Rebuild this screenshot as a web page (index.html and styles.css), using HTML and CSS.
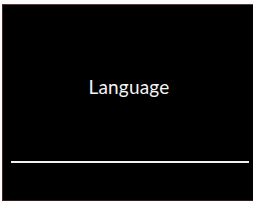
FILE: index.html
```html
<!DOCTYPE html>
<html lang="en">
<head>
    <meta charset="UTF-8">
    <meta name="viewport" content="width=device-width, initial-scale=1.0">
    <title>Language</title>
    <link rel="stylesheet" href="styles.css">
</head>
<body>
    <div class="screen">
        <div class="title-area">
            <h1 class="title">Language</h1>
        </div>
        <div class="divider"></div>
        <div class="footer"></div>
    </div>
</body>
</html>
```

FILE: styles.css
```css
html, body {
    margin: 0;
    padding: 0;
    background-color: #fdfbfb;
    width: 253px;
    height: 201px;
    overflow: hidden;
}

.screen {
    margin: 4px 0 0 2px;
    height: 195px;
    background-color: #000;
    border-top: 1px solid #5a3a3a;
    border-left: 1px solid #4a2626;
    border-bottom: 1px solid #3a1a1a;
    display: flex;
    flex-direction: column;
}

.title-area {
    height: 156px;
    display: flex;
    justify-content: center;
    align-items: center;
    padding-left: 2px;
}

.title {
    margin: 6px 0 0 0;
    font-family: Lato, "Open Sans", sans-serif;
    font-weight: normal;
    font-size: 19px;
    letter-spacing: 0.2px;
    color: #f4f4f4;
}

.divider {
    height: 2px;
    margin: 0 4px 0 8px;
    background-color: #f2f2f2;
}

.footer {
    flex: 1;
}
```
